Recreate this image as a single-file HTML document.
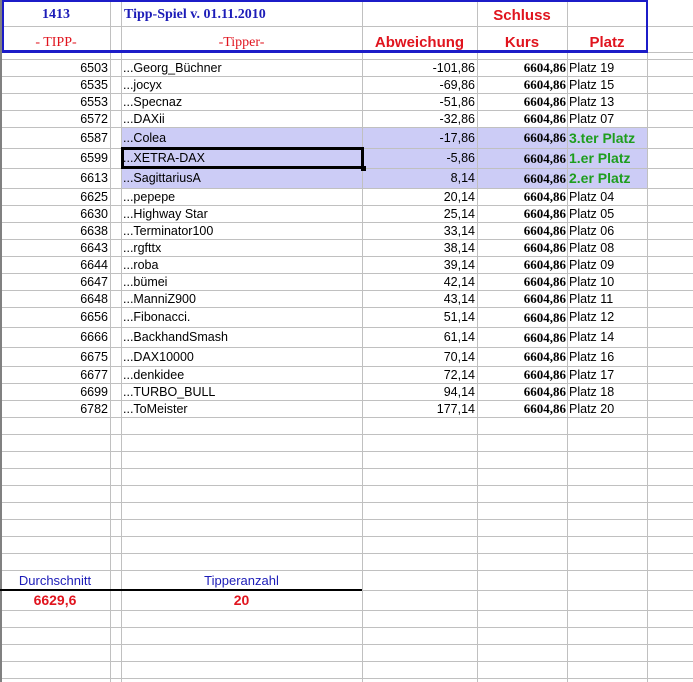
<!DOCTYPE html>
<html><head><meta charset="utf-8"><style>
*{margin:0;padding:0;box-sizing:border-box}
body{width:693px;height:682px;background:#fff;position:relative;overflow:hidden;font-family:"Liberation Sans",sans-serif}
.h{position:absolute;left:0;width:693px;height:1px;background:#c0c0c0}
.v{position:absolute;top:0;height:682px;width:1px;background:#c0c0c0}
.t{position:absolute;white-space:nowrap;font-size:12.5px;color:#000}
.r{text-align:right}
.c{text-align:center}
.k{font-family:"Liberation Serif",serif;font-weight:bold;font-size:13px}
.g{color:#1e9e1e;font-weight:bold;font-size:14px}
.hd{position:absolute;white-space:nowrap;color:#e0141e;font-weight:bold;font-size:15px}
</style></head><body>
<div style="position:absolute;left:121px;top:127px;width:526px;height:61px;background:#ccccf6"></div>
<div id="g"></div>
<div style="position:absolute;left:0;top:0;width:2px;height:682px;background:#808080"></div>
<div style="position:absolute;left:2px;top:0;width:646px;height:53px;border:2px solid #1c1cc8;border-top-width:2px;border-bottom-width:3px"></div>
<div style="position:absolute;left:0;top:589px;width:362px;height:2px;background:#000"></div>
<div style="position:absolute;left:121px;top:147px;width:243px;height:22px;border:3px solid #000"></div>
<div style="position:absolute;left:361px;top:166px;width:5px;height:5px;background:#000"></div>

<div class="t c" style="left:2px;width:108px;top:7px;font-family:'Liberation Serif',serif;font-weight:bold;font-size:14px;color:#1c1cb8">1413</div>
<div class="t" style="left:124px;top:7px;font-family:'Liberation Serif',serif;font-weight:bold;font-size:14px;color:#1c1cb8">Tipp-Spiel v. 01.11.2010</div>
<div class="t c" style="left:2px;width:108px;top:35px;font-family:'Liberation Serif',serif;font-size:14px;color:#e0141e">- TIPP-</div>
<div class="t c" style="left:121px;width:241px;top:35px;font-family:'Liberation Serif',serif;font-size:14px;color:#e0141e">-Tipper-</div>
<div class="hd c" style="left:477px;width:90px;top:7px">Schluss</div>
<div class="hd c" style="left:362px;width:115px;top:34px">Abweichung</div>
<div class="hd c" style="left:477px;width:90px;top:34px">Kurs</div>
<div class="hd c" style="left:567px;width:80px;top:34px">Platz</div>

<div id="rows"></div>

<div class="t c" style="left:0;width:110px;top:573px;font-size:13px;color:#1c1cb8">Durchschnitt</div>
<div class="t c" style="left:121px;width:241px;top:573px;font-size:13px;color:#1c1cb8">Tipperanzahl</div>
<div class="t c" style="left:0;width:110px;top:592px;font-size:14px;font-weight:bold;color:#e0141e">6629,6</div>
<div class="t c" style="left:121px;width:241px;top:592px;font-size:14px;font-weight:bold;color:#e0141e">20</div>

<script>
var g=document.getElementById('g'),s='';
[26,52,59,76,93,110,127,148,168,188,205,222,239,256,273,290,307,327,347,366,383,400,417,434,451,468,485,502,519,536,553,570,590,610,627,644,661,678].forEach(function(y){s+='<div class="h" style="top:'+y+'px"></div>'});
[110,121,362,477,567,647].forEach(function(x){s+='<div class="v" style="left:'+x+'px"></div>'});
g.innerHTML=s;
var d=[
[59,76,'6503','Georg_Büchner','-101,86','Platz 19'],
[76,93,'6535','jocyx','-69,86','Platz 15'],
[93,110,'6553','Specnaz','-51,86','Platz 13'],
[110,127,'6572','DAXii','-32,86','Platz 07'],
[127,148,'6587','Colea','-17,86','3.ter Platz',1],
[148,168,'6599','XETRA-DAX','-5,86','1.er Platz',1],
[168,188,'6613','SagittariusA','8,14','2.er Platz',1],
[188,205,'6625','pepepe','20,14','Platz 04'],
[205,222,'6630','Highway Star','25,14','Platz 05'],
[222,239,'6638','Terminator100','33,14','Platz 06'],
[239,256,'6643','rgfttx','38,14','Platz 08'],
[256,273,'6644','roba','39,14','Platz 09'],
[273,290,'6647','bümei','42,14','Platz 10'],
[290,307,'6648','ManniZ900','43,14','Platz 11'],
[307,327,'6656','Fibonacci.','51,14','Platz 12'],
[327,347,'6666','BackhandSmash','61,14','Platz 14'],
[347,366,'6675','DAX10000','70,14','Platz 16'],
[366,383,'6677','denkidee','72,14','Platz 17'],
[383,400,'6699','TURBO_BULL','94,14','Platz 18'],
[400,417,'6782','ToMeister','177,14','Platz 20']];
var h='';
d.forEach(function(r){var hh=r[1]-r[0],st='top:'+r[0]+'px;height:'+hh+'px;line-height:'+(hh+1)+'px;';
h+='<div class="t r" style="'+st+'left:0;width:108px">'+r[2]+'</div>';
h+='<div class="t" style="'+st+'left:123px">...'+r[3]+'</div>';
h+='<div class="t r" style="'+st+'left:362px;width:113px">'+r[4]+'</div>';
h+='<div class="t r k" style="'+st+'left:477px;width:89px">6604,86</div>';
h+='<div class="t'+(r[6]?' g':'')+'" style="'+st+'left:569px">'+r[5]+'</div>';});
document.getElementById('rows').innerHTML=h;
</script>
</body></html>
